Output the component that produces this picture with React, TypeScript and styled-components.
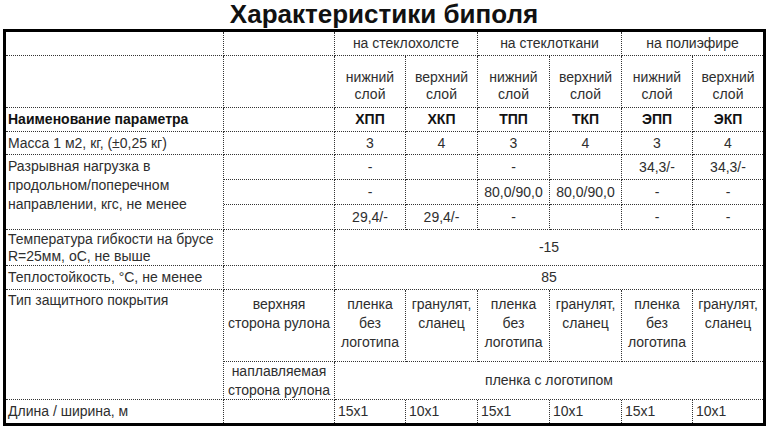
import styled, { createGlobalStyle } from "styled-components";

const GlobalStyle = createGlobalStyle`
  html, body {
    margin: 0;
    padding: 0;
    background: #fff;
  }
  body {
    font-family: "Liberation Sans", Arial, sans-serif;
  }
`;

const Page = styled.div`
  width: 768px;
  height: 431px;
  overflow: hidden;
`;

const Title = styled.h1`
  margin: 0;
  font-size: 26px;
  line-height: 29px;
  font-weight: 700;
  text-align: center;
  color: #111;
`;

const Sheet = styled.div`
  display: grid;
  grid-template-columns: 218px 111px 71px 72px 72px 72px 71px 70px;
  grid-template-rows: 24px 52px 24px 23px 25px 25px 25px 36px 24px 72px 38px 23px;
  width: max-content;
  margin-left: 3px;
  border: 3px solid #000;
`;

type CellProps = {
  $span?: number;
  $rows?: number;
  $align?: "left" | "center";
  $v?: "top" | "center" | "bottom";
  $bold?: boolean;
  $pad?: string;
  $lh?: number;
  $lastCol?: boolean;
  $lastRow?: boolean;
};

const justify = { top: "flex-start", center: "center", bottom: "flex-end" };

const Cell = styled.div<CellProps>`
  grid-column: span ${(p) => p.$span ?? 1};
  grid-row: span ${(p) => p.$rows ?? 1};
  box-sizing: border-box;
  border-right: ${(p) => (p.$lastCol ? "none" : "1px dotted #333")};
  border-bottom: ${(p) => (p.$lastRow ? "none" : "1px dotted #333")};
  display: flex;
  flex-direction: column;
  justify-content: ${(p) => justify[p.$v ?? "center"]};
  padding: ${(p) => p.$pad ?? "0 2px"};
  text-align: ${(p) => p.$align ?? "center"};
  font-size: 14px;
  line-height: ${(p) => p.$lh ?? 17}px;
  font-weight: ${(p) => (p.$bold ? 700 : 400)};
  color: ${(p) => (p.$bold ? "#111" : "#2e2e2e")};
  white-space: pre-line;
  overflow: hidden;
`;

const layers = ["нижний\nслой", "верхний\nслой", "нижний\nслой", "верхний\nслой", "нижний\nслой", "верхний\nслой"];
const codes = ["ХПП", "ХКП", "ТПП", "ТКП", "ЭПП", "ЭКП"];
const mass = ["3", "4", "3", "4", "3", "4"];
const load = [
  ["-", "", "-", "", "34,3/-", "34,3/-"],
  ["-", "", "80,0/90,0", "80,0/90,0", "-", "-"],
  ["29,4/-", "29,4/-", "-", "", "-", "-"],
];
const coating = [
  "пленка\nбез\nлоготипа",
  "гранулят,\nсланец",
  "пленка\nбез\nлоготипа",
  "гранулят,\nсланец",
  "пленка\nбез\nлоготипа",
  "гранулят,\nсланец",
];
const sizes = ["15x1", "10x1", "15x1", "10x1", "15x1", "10x1"];

const App = () => {
  return (
    <Page>
      <GlobalStyle />
      <Title>Характеристики биполя</Title>
      <Sheet>
        {/* группы основы */}
        <Cell />
        <Cell />
        <Cell $span={2}>на стеклохолсте</Cell>
        <Cell $span={2}>на стеклоткани</Cell>
        <Cell $span={2} $lastCol>
          на полиэфире
        </Cell>

        <Cell />
        <Cell />
        {layers.map((t, i) => (
          <Cell key={"l" + i} $v="bottom" $pad="0 2px 4px" $lastCol={i === 5}>
            {t}
          </Cell>
        ))}

        <Cell $align="left" $bold>
          Наименование параметра
        </Cell>
        <Cell />
        {codes.map((t, i) => (
          <Cell key={"c" + i} $bold $lastCol={i === 5}>
            {t}
          </Cell>
        ))}

        <Cell $align="left">Масса 1 м2, кг, (±0,25 кг)</Cell>
        <Cell />
        {mass.map((t, i) => (
          <Cell key={"m" + i} $lastCol={i === 5}>
            {t}
          </Cell>
        ))}

        {load.map((row, r) => [
          r === 0 && (
            <Cell key="loadLabel" $rows={3} $align="left" $v="top" $lh={19} $pad="2px 2px 0">
              {"Разрывная нагрузка в\nпродольном/поперечном\nнаправлении, кгс, не менее"}
            </Cell>
          ),
          <Cell key={"le" + r} />,
          ...row.map((t, i) => (
            <Cell key={"ld" + r + i} $lastCol={i === 5}>
              {t}
            </Cell>
          )),
        ])}

        <Cell $align="left" $v="bottom">
          {"Температура гибкости на брусе\nR=25мм, оС, не выше"}
        </Cell>
        <Cell />
        <Cell $span={6} $lastCol>
          -15
        </Cell>

        <Cell $align="left">Теплостойкость, °С, не менее</Cell>
        <Cell />
        <Cell $span={6} $lastCol>
          85
        </Cell>

        <Cell $rows={2} $align="left" $v="top" $lh={19} $pad="1px 2px 0">
          Тип защитного покрытия
        </Cell>
        <Cell $v="top" $lh={19} $pad="5px 2px 0">
          {"верхняя\nсторона рулона"}
        </Cell>
        {coating.map((t, i) => (
          <Cell key={"k" + i} $v="top" $lh={19} $pad="5px 2px 0" $lastCol={i === 5}>
            {t}
          </Cell>
        ))}
        <Cell $lh={19}>{"наплавляемая\nсторона рулона"}</Cell>
        <Cell $span={6} $lastCol>
          пленка с логотипом
        </Cell>

        <Cell $align="left" $lastRow>
          Длина / ширина, м
        </Cell>
        <Cell $lastRow />
        {sizes.map((t, i) => (
          <Cell key={"s" + i} $align="left" $pad="0 3px" $lastRow $lastCol={i === 5}>
            {t}
          </Cell>
        ))}
      </Sheet>
    </Page>
  );
};

export default App;
